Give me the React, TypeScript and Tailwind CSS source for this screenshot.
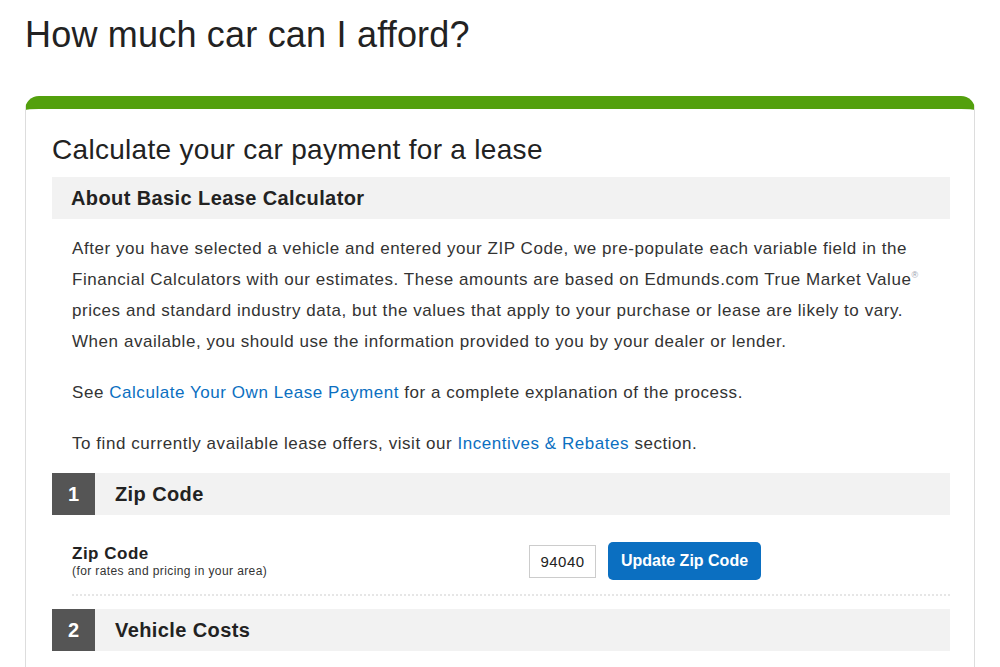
import { FC } from 'react';

// ──────────────────────────────────────────────────────────────
// LEASE CALCULATOR PAGE
// ──────────────────────────────────────────────────────────────

const SectionHeader: FC<{ num: number; title: string }> = ({ num, title }) => (
  <div className="flex h-[42px] items-stretch bg-[#f2f2f2]">
    <div className="flex w-[43px] items-center justify-center bg-[#555555] text-[20px] font-bold text-white">
      {num}
    </div>
    <div className="flex items-center pl-5 text-[20px] font-bold tracking-[0.4px] text-[#222]">{title}</div>
  </div>
);

const App: FC = () => {
  return (
    <div
      className="min-h-screen bg-white px-[25px] pt-[15px] text-[#222]"
      style={{ fontFamily: '"Liberation Sans", Arial, sans-serif' }}
    >
      <h1 className="text-[36px] leading-[40px] font-normal tracking-[0.2px] text-[#222]">How much car can I afford?</h1>

      <div className="mt-[41px] rounded-t-[14px] border border-t-[13px] border-[#dddddd] border-t-[#53a00d] pl-[26px] pr-[24px] pt-[24px] pb-10">
        <h2 className="text-[28px] leading-[34px] tracking-[0.3px] text-[#222]">Calculate your car payment for a lease</h2>

        {/* About */}
        <div className="mt-[10px] flex h-[42px] items-center bg-[#f2f2f2] px-[19px] text-[20px] font-bold tracking-[0.4px] text-[#222]">
          About Basic Lease Calculator
        </div>

        <div className="px-5 pt-[14px] text-[17px] leading-[31px] tracking-[0.55px] text-[#333]">
          <p>
            After you have selected a vehicle and entered your ZIP Code, we pre-populate each variable field in the
            Financial Calculators with our estimates. These amounts are based on Edmunds.com True Market Value
            <sup className="-top-[0.8em] text-[9px] text-gray-400">®</sup> prices and standard industry data, but the values that apply to your
            purchase or lease are likely to vary. When available, you should use the information provided to you by
            your dealer or lender.
          </p>
          <p className="mt-5">
            See <a className="text-[#0b6fc1]">Calculate Your Own Lease Payment</a> for a complete explanation of the
            process.
          </p>
          <p className="mt-5">
            To find currently available lease offers, visit our{' '}
            <a className="text-[#0b6fc1]">Incentives &amp; Rebates</a> section.
          </p>
        </div>

        {/* 1. Zip Code */}
        <div className="mt-[14px]">
          <SectionHeader num={1} title="Zip Code" />
          <div className="ml-5 flex items-center border-b-2 border-dotted border-[#e6e6e6] pt-[27px] pb-[14px]">
            <div className="w-[457px]">
              <div className="text-[17px] leading-[20px] font-bold tracking-[0.5px] text-[#222]">Zip Code</div>
              <div className="text-[12px] leading-[15px] tracking-[0.4px] text-[#333]">(for rates and pricing in your area)</div>
            </div>
            <input
              type="text"
              defaultValue="94040"
              className="h-[33px] w-[67px] border border-[#cccccc] text-center text-[15px] tracking-[0.5px] text-[#222] outline-none"
              style={{ fontFamily: '"Liberation Sans", Arial, sans-serif' }}
            />
            <button className="ml-3 h-[38px] w-[153px] rounded-[5px] bg-[#0b6fc1] text-[16px] font-bold text-white">
              Update Zip Code
            </button>
          </div>
        </div>

        {/* 2. Vehicle Costs */}
        <div className="mt-[13px]">
          <SectionHeader num={2} title="Vehicle Costs" />
        </div>
      </div>
    </div>
  );
};

export default App;
